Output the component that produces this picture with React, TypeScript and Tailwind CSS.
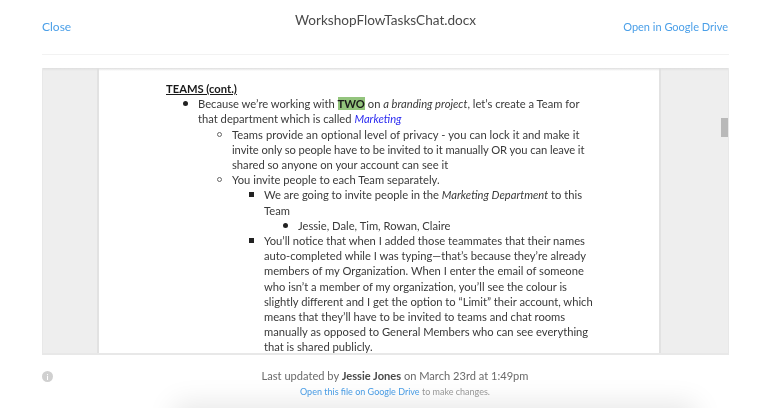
const font = { fontFamily: '"Lato", "Liberation Sans", sans-serif' };

type Item = { indent: string; bullet?: "disc" | "circle" | "square"; lines: React.ReactNode[] };

const items: Item[] = [
  {
    indent: "pl-[32px]",
    bullet: "disc",
    lines: [
      <>Because we’re working with <b className="bg-[#93c47d] font-bold text-[#1a1a1a]">TWO</b> on <i>a branding project</i>, let’s create a Team for</>,
      <>that department which is called <i className="text-[#2b2bf0]">Marketing</i></>,
    ],
  },
  {
    indent: "pl-[66px]",
    bullet: "circle",
    lines: [
      <span className="tracking-[0.05px]">Teams provide an optional level of privacy - you can lock it and make it</span>,
      <span className="tracking-[-0.08px]">invite only so people have to be invited to it manually OR you can leave it</span>,
      "shared so anyone on your account can see it",
    ],
  },
  { indent: "pl-[66px]", bullet: "circle", lines: ["You invite people to each Team separately."] },
  {
    indent: "pl-[98px]",
    bullet: "square",
    lines: [<>We are going to invite people in the <i>Marketing Department</i> to this</>, "Team"],
  },
  { indent: "pl-[132px]", bullet: "disc", lines: ["Jessie, Dale, Tim, Rowan, Claire"] },
  {
    indent: "pl-[98px]",
    bullet: "square",
    lines: [
      "You’ll notice that when I added those teammates that their names",
      "auto-completed while I was typing—that’s because they’re already",
      "members of my Organization. When I enter the email of someone",
      "who isn’t a member of my organization, you’ll see the colour is",
      "slightly different and I get the option to “Limit” their account, which",
      "means that they’ll have to be invited to teams and chat rooms",
      "manually as opposed to General Members who can see everything",
      "that is shared publicly.",
    ],
  },
];

function Bullet({ kind }: { kind: "disc" | "circle" | "square" }) {
  const shape =
    kind === "disc"
      ? "w-[5px] h-[5px] rounded-full bg-[#222]"
      : kind === "circle"
        ? "w-[5px] h-[5px] rounded-full border border-[#666]"
        : "w-[5px] h-[5px] bg-[#222]";
  return (
    <span className="absolute left-[-15px] top-[5px] flex items-center justify-center">
      <span className={shape} />
    </span>
  );
}

export default function App() {
  return (
    <div style={font} className="relative h-[408px] w-[770px] overflow-hidden bg-white blur-[0.35px]">
      <div className="ml-[42px] grid h-[55px] w-[687px] grid-cols-[1fr_auto_1fr] items-start border-b border-[#f2f2f2]">
        <a className="mt-[19px] text-[12px] leading-[16px] text-[#4a9fe8]">Close</a>
        <div className="mt-[11px] text-[13.6px] leading-[18px] text-[#4a4a4a]">WorkshopFlowTasksChat.docx</div>
        <a className="mr-[1px] mt-[19px] justify-self-end text-[11px] leading-[16px] text-[#4a9fe8]">Open in Google Drive</a>
      </div>

      <div className="relative ml-[42px] mt-[13px] flex h-[287px] w-[687px] border-x border-b-2 border-[#e8e8e8] bg-[#eeeeee]">
        <div className="w-[56px] border-r-2 border-[#e2e2e2]" />
        <div className="flex-1 overflow-hidden bg-white pl-[67px] pt-[13px] text-[11.2px] leading-[15.2px] text-[#3a3a3a]">
          <div className="font-bold text-[#1a1a1a] underline">TEAMS (cont.)</div>
          {items.map((it, i) => (
            <div key={i} className={it.indent}>
              <div className="relative">
                {it.bullet && <Bullet kind={it.bullet} />}
                {it.lines.map((l, j) => (
                  <div key={j} className="whitespace-nowrap">
                    {l}
                  </div>
                ))}
              </div>
            </div>
          ))}
        </div>
        <div className="w-[69px] border-l-2 border-[#e2e2e2]" />
        <div className="absolute inset-x-0 top-0 h-[3px] bg-gradient-to-b from-[#dedede] to-[#dedede00]" />
        <div className="absolute left-[678px] top-[50px] h-[19px] w-[7px] bg-[#b9b9b9]" />
      </div>

      <div className="relative ml-[42px] mt-[7px] flex w-[687px] flex-col items-center pl-[19px]">
        <span className="absolute left-0 top-[9px] flex h-[11px] w-[11px] items-center justify-center rounded-full bg-[#d0d0d0] text-[8px] font-bold leading-none text-white">
          i
        </span>
        <div className="mt-[6px] text-[11.1px] leading-[15px] text-[#6a6a6a]">
          Last updated by <b className="font-bold text-[#4a4a4a]">Jessie Jones</b> on March 23rd at 1:49pm
        </div>
        <div className="mt-[1px] text-[9px] leading-[15px] text-[#9a9a9a]">
          <a className="text-[#4a9fe8]">Open this file on Google Drive</a> to make changes.
        </div>
      </div>

      <div className="absolute left-[180px] top-[410px] h-[20px] w-[510px] shadow-[0_0_28px_6px_rgba(0,0,0,0.1)]" />
    </div>
  );
}
